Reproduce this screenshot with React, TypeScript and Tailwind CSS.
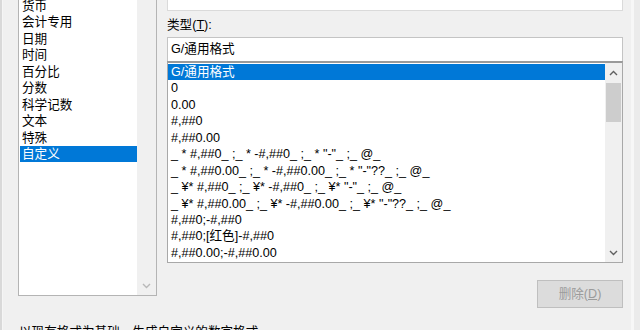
import React from "react"

const categories = ["货币", "会计专用", "日期", "时间", "百分比", "分数", "科学记数", "文本", "特殊", "自定义"]

const formats = [
	"G/通用格式",
	"0",
	"0.00",
	"#,##0",
	"#,##0.00",
	'_ * #,##0_ ;_ * -#,##0_ ;_ * "-"_ ;_ @_',
	'_ * #,##0.00_ ;_ * -#,##0.00_ ;_ * "-"??_ ;_ @_',
	'_ ¥* #,##0_ ;_ ¥* -#,##0_ ;_ ¥* "-"_ ;_ @_',
	'_ ¥* #,##0.00_ ;_ ¥* -#,##0.00_ ;_ ¥* "-"??_ ;_ @_',
	"#,##0;-#,##0",
	"#,##0;[红色]-#,##0",
	"#,##0.00;-#,##0.00",
]

function Chevron({ up = false, color = "#606060" }: { up?: boolean; color?: string }) {
	return (
		<svg width="9" height="6" viewBox="0 0 9 6">
			<polyline
				points={up ? "1,5 4.5,1.5 8,5" : "1,1 4.5,4.5 8,1"}
				fill="none"
				stroke={color}
				strokeWidth="1.4"
			/>
		</svg>
	)
}

export default function App() {
	return (
		<div
			className="w-[640px] h-[330px] overflow-hidden bg-[#f0f0f0] flex text-[12.6px] text-black"
			style={{ fontFamily: '"Liberation Sans", "Noto Sans CJK SC", sans-serif' }}
		>
			{/* left edge of window */}
			<div className="w-[3px] flex">
				<div className="w-[2px] bg-[#d9d9d9]" />
				<div className="w-[1px] bg-[#f5f5f5]" />
			</div>

			<div className="w-[628px] flex flex-col">
				<div className="flex items-start mt-[-20px]">
					{/* category list */}
					<div className="ml-[15px] mt-[17px] w-[139px] h-[299px] border border-[#b4b4b4] bg-white flex">
						<div className="w-[118px] flex flex-col pl-[1px]">
							{categories.map((c, i) => (
								<div
									key={c}
									className={
										"h-[16.45px] leading-[16.45px] pl-[2px] whitespace-nowrap " +
										(i === categories.length - 1 ? "bg-[#0078d7] text-white" : "")
									}
								>
									{c}
								</div>
							))}
						</div>
						<div className="w-[19px] bg-[#f0f0f0] flex flex-col justify-end items-center pb-[6px]">
							<Chevron color="#b8b8b8" />
						</div>
					</div>

					{/* right side */}
					<div className="ml-[10px] w-[456px] flex flex-col">
						<div className="h-[31px] border border-[#dadada] bg-white" />
						<div className="mt-[6px] h-[16px] leading-[16px] whitespace-nowrap">
							类型(<span className="underline">T</span>):
						</div>
						<div className="mt-[4px] h-[24px] border border-[#c4c4c4] border-b-0 bg-white pl-[3px] leading-[23px] whitespace-nowrap">
							G/通用格式
						</div>
						<div className="h-[202px] border border-[#a8a8a8] border-t-2 border-t-[#9a9a9a] bg-white flex">
							<div className="flex-1 flex flex-col pt-[1px]">
								{formats.map((f, i) => (
									<div
										key={f}
										className={
											"h-[16.45px] leading-[16.45px] pl-[3px] whitespace-pre " +
											(i === 0 ? "bg-[#0078d7] text-white" : "")
										}
									>
										{f}
									</div>
								))}
							</div>
							<div className="w-[17px] bg-[#f0f0f0] flex flex-col items-center">
								<div className="h-[20px] flex items-center justify-center">
									<Chevron up />
								</div>
								<div className="w-[15px] h-[39px] bg-[#cdcdcd]" />
								<div className="flex-1" />
								<div className="h-[18px] flex items-center justify-center">
									<Chevron />
								</div>
							</div>
						</div>
						<div className="mt-[17px] flex justify-end">
							<button className="w-[86px] h-[28px] border border-[#bfbfbf] bg-[#dcdcdc] text-[#9b9b9b] leading-[26px]">
								删除(<span className="underline">D</span>)
							</button>
						</div>
					</div>
				</div>

				<div className="ml-[16px] mt-[16px] h-[16px] leading-[16px] whitespace-nowrap">
					以现有格式为基础，生成自定义的数字格式。
				</div>
			</div>

			{/* right edge of window */}
			<div className="flex-1 flex">
				<div className="w-[3px] bg-[#f7f7f7]" />
				<div className="flex-1 bg-[#ebebeb]" />
			</div>
		</div>
	)
}
